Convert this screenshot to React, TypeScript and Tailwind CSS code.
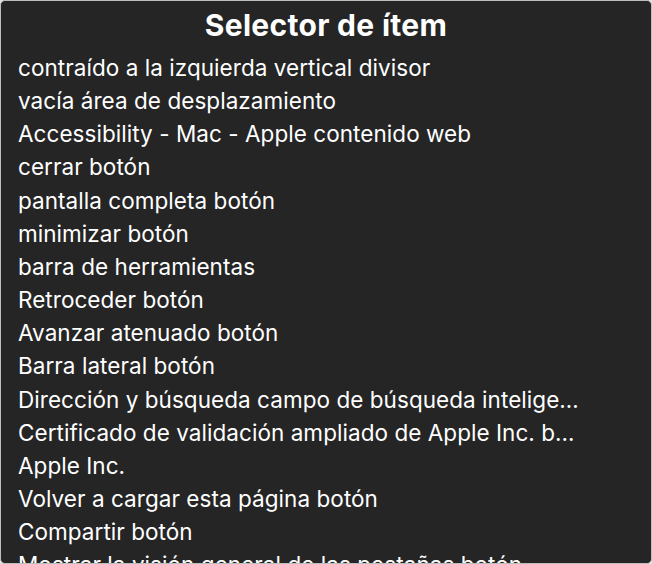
import React from 'react';

const items: string[] = [
  'contraído a la izquierda vertical divisor',
  'vacía área de desplazamiento',
  'Accessibility - Mac - Apple contenido web',
  'cerrar botón',
  'pantalla completa botón',
  'minimizar botón',
  'barra de herramientas',
  'Retroceder botón',
  'Avanzar atenuado botón',
  'Barra lateral botón',
  'Dirección y búsqueda campo de búsqueda intelige…',
  'Certificado de validación ampliado de Apple Inc. b…',
  'Apple Inc.',
  'Volver a cargar esta página botón',
  'Compartir botón',
  'Mostrar la visión general de las pestañas botón',
];

const App: React.FC = () => {
  return (
    <div className="w-[652px] h-[564px] bg-[#e5e5e5]">
      <div
        className="h-full w-full overflow-hidden rounded-[5px] border border-[#bdbdbd] bg-[#252525] text-white"
        style={{ fontFamily: 'Inter, "Liberation Sans", sans-serif' }}
      >
        <h1 className="pt-[9px] text-center text-[30px] leading-[30px] font-bold tracking-[0.3px]">
          Selector de ítem
        </h1>
        <ul className="mt-[11px] pl-[17px]">
          {items.map((item, i) => (
            <li key={i} className="text-[22.5px] leading-[33.15px] tracking-[0.05px] whitespace-nowrap">
              {item}
            </li>
          ))}
        </ul>
      </div>
    </div>
  );
};

export default App;
